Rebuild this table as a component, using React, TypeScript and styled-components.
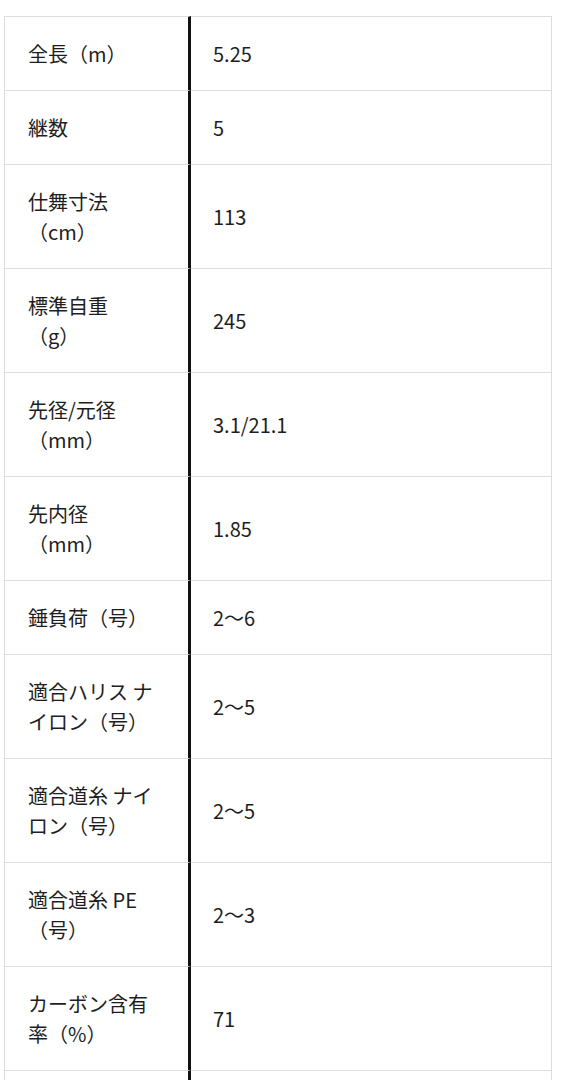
import React from "react";
import styled, { createGlobalStyle } from "styled-components";

const GlobalStyle = createGlobalStyle`
  *, *::before, *::after {
    box-sizing: border-box;
  }
  body {
    margin: 0;
    background: #ffffff;
    font-family: "Noto Sans CJK JP", "Noto Sans", sans-serif;
    color: #1e1e1e;
    text-spacing-trim: space-all;
  }
`;

const Page = styled.div`
  padding: 16px 0 0 4px;
`;

const SpecTable = styled.table`
  width: 548px;
  table-layout: fixed;
  border-collapse: separate;
  border-spacing: 0;
  font-size: 20px;
  line-height: 30px;
`;

const Row = styled.tr`
  &:first-child td {
    border-top: 1px solid #dedede;
  }
`;

const Label = styled.td`
  width: 187px;
  padding: 22px 32px 21px 23px;
  border-left: 1px solid #dedede;
  border-bottom: 1px solid #dedede;
  border-right: 3px solid #111111;
  vertical-align: middle;
  text-spacing-trim: space-all;
`;

const Value = styled.td`
  padding: 22px 22px 21px;
  border-right: 1px solid #dedede;
  border-bottom: 1px solid #dedede;
  vertical-align: middle;
`;

const specs: [string, string][] = [
  ["全長（m）", "5.25"],
  ["継数", "5"],
  ["仕舞寸法（cm）", "113"],
  ["標準自重（g）", "245"],
  ["先径/元径（mm）", "3.1/21.1"],
  ["先内径（mm）", "1.85"],
  ["錘負荷（号）", "2〜6"],
  ["適合ハリス ナイロン（号）", "2〜5"],
  ["適合道糸 ナイロン（号）", "2〜5"],
  ["適合道糸 PE（号）", "2〜3"],
  ["カーボン含有率（%）", "71"],
  ["本体価格（円）", "46,500"],
];

export default function App() {
  return (
    <Page>
      <GlobalStyle />
      <SpecTable>
        <tbody>
          {specs.map(([label, value]) => (
            <Row key={label}>
              <Label>{label}</Label>
              <Value>{value}</Value>
            </Row>
          ))}
        </tbody>
      </SpecTable>
    </Page>
  );
}
